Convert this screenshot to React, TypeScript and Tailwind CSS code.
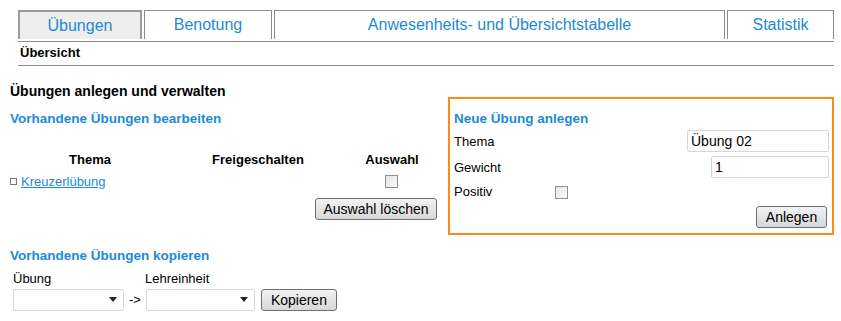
import React from 'react';

const blue = 'text-[#1d8ad6]';

function Tab({ label, active, className }: { label: string; active?: boolean; className: string }) {
  return (
    <div
      className={`flex h-[29px] items-center justify-center text-[16px] ${blue} ${
        active ? 'border-2 border-b-0 border-[#9a9a9a] bg-[#eeeeee]' : 'border border-b-0 border-[#8a8a8a] bg-white'
      } ${className}`}
    >
      {label}
    </div>
  );
}

function Checkbox() {
  return <span className="inline-block h-[13px] w-[13px] border border-[#8f8f8f] bg-gradient-to-br from-[#e6e6e6] to-[#fbfbfb]" />;
}

function Button({ label, className = '' }: { label: string; className?: string }) {
  return (
    <button className={`h-[22px] whitespace-nowrap rounded-[3px] border border-[#707070] bg-gradient-to-b from-[#f2f2f2] to-[#d8d8d8] px-0 text-[14px] text-black ${className}`}>
      {label}
    </button>
  );
}

function Select({ className }: { className: string }) {
  return (
    <div className={`flex h-[22px] items-center justify-end rounded-[2px] border border-[#d7d7d7] bg-white pr-[6px] ${className}`}>
      <svg width="8" height="5" viewBox="0 0 8 5"><path d="M0 0h8L4 5z" fill="#222" /></svg>
    </div>
  );
}

export default function App() {
  return (
    <div className="h-[321px] w-[841px] bg-white text-[13px] text-black" style={{ fontFamily: '"Liberation Sans", Arial, sans-serif' }}>
      <div className="pl-[18px] pt-[10px]">
        <div className="flex w-[816px] items-end gap-[2px] border-b border-[#8a8a8a] pb-[2px]">
          <Tab label="Übungen" active className="w-[124px]" />
          <Tab label="Benotung" className="w-[128px]" />
          <Tab label="Anwesenheits- und Übersichtstabelle" className="w-[451px]" />
          <Tab label="Statistik" className="w-[107px]" />
        </div>
        <div className="w-[816px] border-b border-[#8a8a8a] pb-[5px] pl-[2px] pt-[4px] font-bold leading-[14px]">Übersicht</div>
      </div>

      <div className="flex items-start gap-[10px] pl-[10px] pt-[15px]">
        <div className="w-[428px]">
          <div className="text-[14px] font-bold">Übungen anlegen und verwalten</div>
          <div className={`mt-[7px] text-[13.5px] font-bold ${blue}`}>Vorhandene Übungen bearbeiten</div>
          <div className="mt-[21px] grid grid-cols-[160px_176px_92px] font-bold">
            <div className="text-center">Thema</div>
            <div className="text-center">Freigeschalten</div>
            <div className="text-center">Auswahl</div>
          </div>
          <div className="mt-[2px] grid grid-cols-[160px_176px_92px] items-center">
            <div className="flex items-center gap-[4px]">
              <span className="inline-block h-[7px] w-[7px] border border-[#777]" />
              <a className={`underline ${blue}`}>Kreuzerlübung</a>
            </div>
            <div />
            <div className="flex justify-center pr-[1px]"><Checkbox /></div>
          </div>
          <div className="mt-[7px] flex justify-end pr-[1px]">
            <Button label="Auswahl löschen" className="w-[122px]" />
          </div>
        </div>

        <div className="mt-[16px] h-[138px] w-[386px] border-2 border-[#ff8a14] pl-[4px] pr-[3px] pt-[10px]">
          <div className={`text-[13.5px] font-bold ${blue}`}>Neue Übung anlegen</div>
          <div className="mt-[1px] flex items-center justify-between">
            <span>Thema</span>
            <div className="flex h-[22px] w-[142px] items-center rounded-[2px] border border-[#d7d7d7] pl-[3px] text-[14px]">Übung 02</div>
          </div>
          <div className="mt-[4px] flex items-center justify-between">
            <span>Gewicht</span>
            <div className="flex h-[22px] w-[118px] items-center rounded-[2px] border border-[#d7d7d7] pl-[3px] text-[14px]">1</div>
          </div>
          <div className="mt-[4px] flex items-center">
            <span className="w-[101px]">Positiv</span>
            <Checkbox />
          </div>
          <div className="mt-[4px] flex justify-end pr-[2px]">
            <Button label="Anlegen" className="w-[71px]" />
          </div>
        </div>
      </div>

      <div className="pl-[10px] pt-[11px]">
        <div className={`text-[13.5px] font-bold ${blue}`}>Vorhandene Übungen kopieren</div>
        <div className="mt-[3px] flex pl-[3px]">
          <span className="w-[132px]">Übung</span>
          <span>Lehreinheit</span>
        </div>
        <div className="mt-[0px] flex items-center pl-[3px]">
          <Select className="w-[111px]" />
          <span className="mx-[5px]">-&gt;</span>
          <Select className="w-[109px]" />
          <Button label="Kopieren" className="ml-[6px] w-[76px]" />
        </div>
      </div>
    </div>
  );
}
